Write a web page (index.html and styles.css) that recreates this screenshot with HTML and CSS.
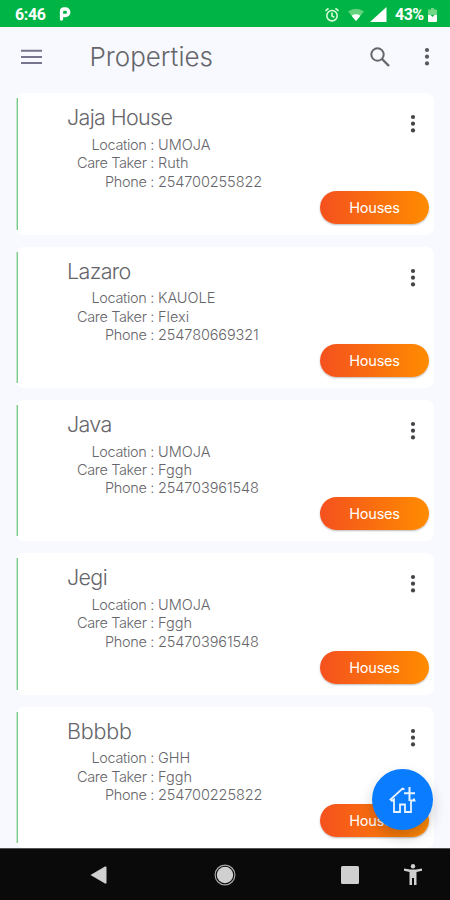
FILE: index.html
```html
<!DOCTYPE html>
<html lang="en">
<head>
<meta charset="utf-8">
<title>Properties</title>
<link rel="stylesheet" href="styles.css">
</head>
<body>
<svg class="defs" width="0" height="0"><symbol id="dots" viewBox="0 0 6 20"><circle cx="3" cy="3" r="2.1"/><circle cx="3" cy="9.7" r="2.1"/><circle cx="3" cy="16.4" r="2.1"/></symbol></svg>
<div class="screen">
  <header class="status">
    <span class="time">6:46</span>
    <svg class="park" width="12" height="15" viewBox="0 0 12 15"><path d="M2.5 12V4.2Q2.5 2 5 2H6.5A3.1 3.1 0 0 1 6.5 8.5H5" fill="none" stroke="#fff" stroke-width="3.3" stroke-linecap="round"/></svg>
    <svg class="alarm" width="16" height="16" viewBox="0 0 16 16" fill="none" stroke="#d9fbd9" stroke-width="1.6"><circle cx="8" cy="8.7" r="5.2"/><path d="M8 5.5V9l2.3 1.3M1.5 3.9l3-2.5M14.5 3.9l-3-2.5"/></svg>
    <svg class="wifi" width="18" height="14" viewBox="0 0 18 14"><path d="M1 3.5Q9-2 17 3.5L9 13Z" fill="#65d37f"/><path d="M4.6 7.7Q9 4.8 13.4 7.7L9 13Z" fill="#fff"/></svg>
    <svg class="signal" width="17" height="15" viewBox="0 0 17 15"><path d="M0 15L16.5 0V15Z" fill="#fff"/></svg>
    <span class="percent">43%</span>
    <svg class="battery" width="9" height="14" viewBox="0 0 9 14"><path d="M3 0h3v1.5h2q1 0 1 1V7H0V2.500q0-1 1-1h2Z" fill="#70d787"/><path d="M0 7h2.500l2 2 2-2H9v6q0 1-1 1H1q-1 0-1-1Z" fill="#fff"/></svg>
  </header>
  <nav class="toolbar">
    <svg class="menu" width="21" height="16" viewBox="0 0 21 16"><path d="M0 1.700h21M0 8h21M0 14h21" stroke="#77758d" stroke-width="2"/></svg>
    <h1>Properties</h1>
    <svg class="search" width="20" height="20" viewBox="0 0 20 20" fill="none" stroke="#66666c" stroke-width="2"><circle cx="7.500" cy="7.500" r="6.200"/><path d="M12 12l7 7" stroke-width="2.400"/></svg>
    <svg class="more" width="6" height="20"><use href="#dots"/></svg>
  </nav>
  <main class="list">
    <article class="card"><h2>Jaja House</h2><dl><dt>Location :</dt><dd>UMOJA</dd><dt>Care Taker :</dt><dd>Ruth</dd><dt>Phone :</dt><dd class="num">254700255822</dd></dl><svg class="dots" width="6" height="20"><use href="#dots"/></svg><button>Houses</button></article>
    <article class="card"><h2>Lazaro</h2><dl><dt>Location :</dt><dd>KAUOLE</dd><dt>Care Taker :</dt><dd>Flexi</dd><dt>Phone :</dt><dd class="num">254780669321</dd></dl><svg class="dots" width="6" height="20"><use href="#dots"/></svg><button>Houses</button></article>
    <article class="card"><h2>Java</h2><dl><dt>Location :</dt><dd>UMOJA</dd><dt>Care Taker :</dt><dd>Fggh</dd><dt>Phone :</dt><dd class="num">254703961548</dd></dl><svg class="dots" width="6" height="20"><use href="#dots"/></svg><button>Houses</button></article>
    <article class="card"><h2>Jegi</h2><dl><dt>Location :</dt><dd>UMOJA</dd><dt>Care Taker :</dt><dd>Fggh</dd><dt>Phone :</dt><dd class="num">254703961548</dd></dl><svg class="dots" width="6" height="20"><use href="#dots"/></svg><button>Houses</button></article>
    <article class="card"><h2 class="wide">Bbbbb</h2><dl><dt>Location :</dt><dd>GHH</dd><dt>Care Taker :</dt><dd>Fggh</dd><dt>Phone :</dt><dd class="num">254700225822</dd></dl><svg class="dots" width="6" height="20"><use href="#dots"/></svg><button>Houses</button></article>
  </main>
  <div class="fab"><svg width="28" height="28" viewBox="0 0 28 28" fill="none" stroke="#e9f3ff" stroke-width="1.800"><path d="M15.500 3.500L13.500 2.500L1.500 13.500L3 14.800L5 13.500V26H11V18.500H16V26H22V14.500H25.500L24.500 12.500"/><path d="M20.500 1V15M15 7.300H26" stroke-width="2"/></svg></div>
  <footer class="nav">
    <svg class="back" width="17" height="18" viewBox="0 0 17 18"><path d="M0.500 9L15 .500Q16.500 0 16.500 1.500V16.500Q16.500 18 15 17.500Z"/></svg>
    <svg class="home" width="22" height="22" viewBox="0 0 22 22"><circle cx="11" cy="11" r="8.200"/><circle cx="11" cy="11" r="9.900" fill="none" stroke="#a8a8a8" stroke-width="1.200"/></svg>
    <svg class="recent" width="18" height="18" viewBox="0 0 18 18"><rect width="18" height="18" rx="1.500"/></svg>
    <svg class="access" width="18" height="21" viewBox="0 0 18 21"><circle cx="9" cy="2.200" r="2.200"/><path d="M0 4.500L6 5.500H12L18 4.500V6.700L12.500 8V21H10V14H8V21H5.500V8L0 6.700Z"/></svg>
  </footer>
</div>
</body>
</html>
```
FILE: styles.css
```css
* { box-sizing: border-box; }
body { margin: 0; font-family: Inter, "Liberation Sans", sans-serif; color: #66666a; }
svg { display: block; flex: none; }
.defs { position: absolute; }
.screen { position: relative; display: flex; flex-direction: column; width: 450px; height: 900px; overflow: hidden; background: #f8f9ff; }
.status { flex: none; display: flex; align-items: center; height: 27px; padding: 2px 13px 0 15px; background: #00b546; color: #fff; font: 700 16px/25px Roboto, sans-serif; }
.time { width: 44px; letter-spacing: -.4px; }
.alarm { margin-left: auto; }
.wifi { margin-left: 7px; }
.signal { margin-left: 5px; }
.percent { width: 28px; margin-left: 8px; letter-spacing: -.5px; }
.battery { margin-left: 5px; }
.toolbar { flex: none; display: flex; align-items: center; height: 66.300px; padding: 0 20.500px 6px; }
h1 { width: 140px; margin: 0 0 0 48px; font-size: 26px; font-weight: 300; line-height: 34px; }
.search { margin-left: auto; }
.more { margin-left: 34px; fill: #58585e; }
.list { flex: 1; min-height: 0; display: flex; flex-direction: column; gap: 12px; padding: 0 16px; overflow: hidden; }
.card { position: relative; flex: none; height: 141.330px; padding: 11px 0 0 51px; background: #fff; border-radius: 8px; }
.card::before { content: ""; position: absolute; left: 0; top: 5px; bottom: 5px; width: 2px; background: linear-gradient(90deg, #c5e7cb 50%, #78ca86 50%); }
h2 { margin: 0; font-size: 21.500px; font-weight: 300; line-height: 27px; letter-spacing: -.650px; }
.wide { letter-spacing: -.200px; }
dl { display: grid; grid-template-columns: 87px 1fr; column-gap: 4px; margin: 4.700px 0 0; font-size: 14.500px; font-weight: 300; line-height: 18.300px; }
dt { text-align: right; white-space: nowrap; letter-spacing: -.350px; }
dd { margin: 0; }
.num { letter-spacing: -.100px; }
.dots { position: absolute; right: 18px; top: 21px; fill: #444448; }
button { position: absolute; right: 5px; top: 97.500px; width: 109px; height: 33px; padding: 0; border: 0; border-radius: 17px; background: linear-gradient(90deg, #f4511e, #ff8c00); box-shadow: 0 1px 2px #0004; color: #fff; font: 400 14.500px/33px Inter, sans-serif; letter-spacing: -.200px; }
.fab { position: absolute; left: 372px; top: 769px; display: grid; place-items: center; width: 61px; height: 61px; border-radius: 50%; background: #0a7cff; box-shadow: 0 7px 14px #0003; }
.nav { z-index: 1; flex: none; display: flex; align-items: center; height: 52px; padding: 0 28px 0 90px; border-top: 1px solid #555; background: #0a0a0a; fill: #d0d0d0; }
.home { margin-left: 107px; }
.recent { margin-left: 105px; }
.access { margin-left: 45px; }
```
